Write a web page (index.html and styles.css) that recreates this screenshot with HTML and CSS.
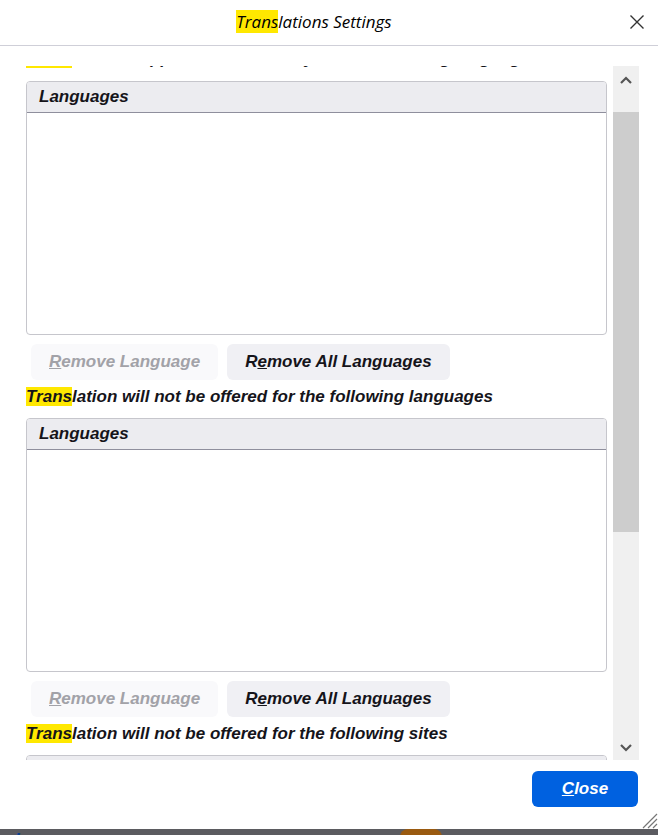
FILE: index.html
```html
<!DOCTYPE html>
<html>
<head>
  <title>Translations Settings</title>
  <link rel="stylesheet" href="styles.css">
</head>
<body>
  <div class="dialog">
    <header class="dialog-header">
      <h1 class="dialog-title"><mark class="hit">Trans</mark>lations Settings</h1>
      <button class="close-x" aria-label="Close">
        <svg width="16" height="16" viewBox="0 0 16 16">
          <path d="M1.5 1.5 L14.5 14.5 M14.5 1.5 L1.5 14.5" stroke="#333" stroke-width="1.4" fill="none"/>
        </svg>
      </button>
    </header>

    <div class="dialog-body">
      <div class="scroll-content">
        <div class="scroll-inner">
          <p class="section-label"><mark class="hit">Trans</mark>lation is applied automatically for the following languages</p>

          <div class="listbox">
            <div class="listbox-head">Languages</div>
          </div>
          <div class="button-row">
            <button class="btn" disabled><u>R</u>emove Language</button>
            <button class="btn">R<u>e</u>move All Languages</button>
          </div>

          <p class="section-label"><mark class="hit">Trans</mark>lation will not be offered for the following languages</p>

          <div class="listbox">
            <div class="listbox-head">Languages</div>
          </div>
          <div class="button-row">
            <button class="btn" disabled><u>R</u>emove Language</button>
            <button class="btn">R<u>e</u>move All Languages</button>
          </div>

          <p class="section-label"><mark class="hit">Trans</mark>lation will not be offered for the following sites</p>

          <div class="listbox">
            <div class="listbox-head">Sites</div>
          </div>
        </div>
      </div>

      <!-- fake scrollbar, the list is scrolled a little -->
      <div class="scrollbar">
        <div class="sb-arrow">
          <svg width="12" height="8" viewBox="0 0 12 8"><path d="M1 7 L6 2 L11 7" stroke="#555" stroke-width="2.2" fill="none"/></svg>
        </div>
        <div class="sb-thumb"></div>
        <div class="sb-rest">
          <svg width="12" height="8" viewBox="0 0 12 8"><path d="M1 1 L6 6 L11 1" stroke="#555" stroke-width="2.2" fill="none"/></svg>
        </div>
      </div>
    </div>

    <footer class="dialog-footer">
      <button class="btn-primary"><u>C</u>lose</button>
    </footer>

    <svg class="grip" width="18" height="18" viewBox="0 0 18 18">
      <path d="M17 3 L3 17 M17 8 L8 17 M17 13 L13 17" stroke="#777" stroke-width="1.2" fill="none"/>
    </svg>
  </div>

  <div class="page-behind">
    <a class="learn-more" href="#">Learn more</a>
    <span class="orange-blob"></span>
  </div>
</body>
</html>
```

FILE: styles.css
```css
html, body {
  margin: 0;
  padding: 0;
}

body {
  width: 658px;
  height: 835px;
  overflow: hidden;
  background: #5b5b60;
  font-family: "Liberation Sans", Arial, sans-serif;
  color: #15141a;
}

.dialog {
  position: relative;
  height: 829px;
  background: #fff;
  display: flex;
  flex-direction: column;
}

.dialog-header {
  height: 45px;
  flex-shrink: 0;
  border-bottom: 1px solid #cfcfd8;
  display: flex;
  align-items: center;
  justify-content: center;
  padding-right: 30px;
  position: relative;
}

.dialog-title {
  margin: 0;
  font-family: "Open Sans", "Noto Sans", sans-serif;
  font-style: italic;
  font-weight: 400;
  font-size: 17px;
  line-height: 22px;
  color: #000;
  padding-bottom: 1px;
}

.hit {
  background: #ffe800;
  color: inherit;
}

.close-x {
  position: absolute;
  right: 13px;
  top: 14px;
  width: 16px;
  height: 16px;
  padding: 0;
  border: none;
  background: none;
}

.dialog-body {
  height: 694px;
  flex-shrink: 0;
  margin-top: 20px;
  display: flex;
  padding-right: 19px;
}

.scroll-content {
  flex: 1;
  overflow: hidden;
  padding-left: 26px;
  padding-right: 6px;
}

.scroll-inner {
  margin-top: -17px;
}

.scroll-inner > .listbox:nth-child(2) {
  margin-top: 12px;
}

.section-label {
  margin: 0;
  font-size: 17px;
  line-height: 20px;
  font-weight: bold;
  font-style: italic;
  white-space: nowrap;
}

.listbox {
  margin-top: 11px;
  height: 254px;
  box-sizing: border-box;
  border: 1px solid #c6c6cc;
  border-radius: 4px;
  overflow: hidden;
  background: #fff;
}

.listbox-head {
  height: 30px;
  line-height: 30px;
  background: #ececf0;
  border-bottom: 1px solid #8f8f9d;
  padding-left: 12px;
  font-size: 17px;
  font-weight: bold;
  font-style: italic;
}

.button-row {
  margin-top: 9px;
  margin-bottom: 7px;
  margin-left: 5px;
  display: flex;
  gap: 9px;
}

.btn {
  height: 36px;
  padding: 0 18px;
  border: none;
  border-radius: 6px;
  background: #f0f0f4;
  font-family: "Liberation Sans", Arial, sans-serif;
  font-size: 17px;
  font-weight: bold;
  font-style: italic;
  color: #15141a;
}

.btn:disabled {
  background: #f9f9fb;
  color: #a2a2a8;
}

.scrollbar {
  width: 26px;
  background: #f0f0f0;
  display: flex;
  flex-direction: column;
}

.sb-arrow {
  height: 46px;
  display: flex;
  justify-content: center;
  padding-top: 10px;
  box-sizing: border-box;
}

.sb-thumb {
  height: 420px;
  background: #cdcdcd;
}

.sb-rest {
  flex: 1;
  display: flex;
  justify-content: center;
  align-items: flex-end;
  padding-bottom: 8px;
}

.dialog-footer {
  flex: 1;
  display: flex;
  justify-content: flex-end;
  align-items: flex-start;
  padding-top: 11px;
  padding-right: 20px;
}

.btn-primary {
  width: 106px;
  height: 36px;
  border: none;
  border-radius: 6px;
  background: #0061e0;
  color: #fff;
  font-family: "Liberation Sans", Arial, sans-serif;
  font-size: 17px;
  font-weight: bold;
  font-style: italic;
}

.grip {
  position: absolute;
  right: 0;
  bottom: 0;
}

.page-behind {
  height: 6px;
  position: relative;
  overflow: hidden;
}

.learn-more {
  position: absolute;
  left: 15px;
  top: 1px;
  font-size: 17px;
  font-weight: bold;
  font-style: italic;
  color: #0a3f8f;
  text-decoration: underline;
}

.orange-blob {
  position: absolute;
  left: 400px;
  top: 0;
  width: 42px;
  height: 10px;
  border-radius: 8px 8px 0 0;
  background: #9a5a10;
}
```
